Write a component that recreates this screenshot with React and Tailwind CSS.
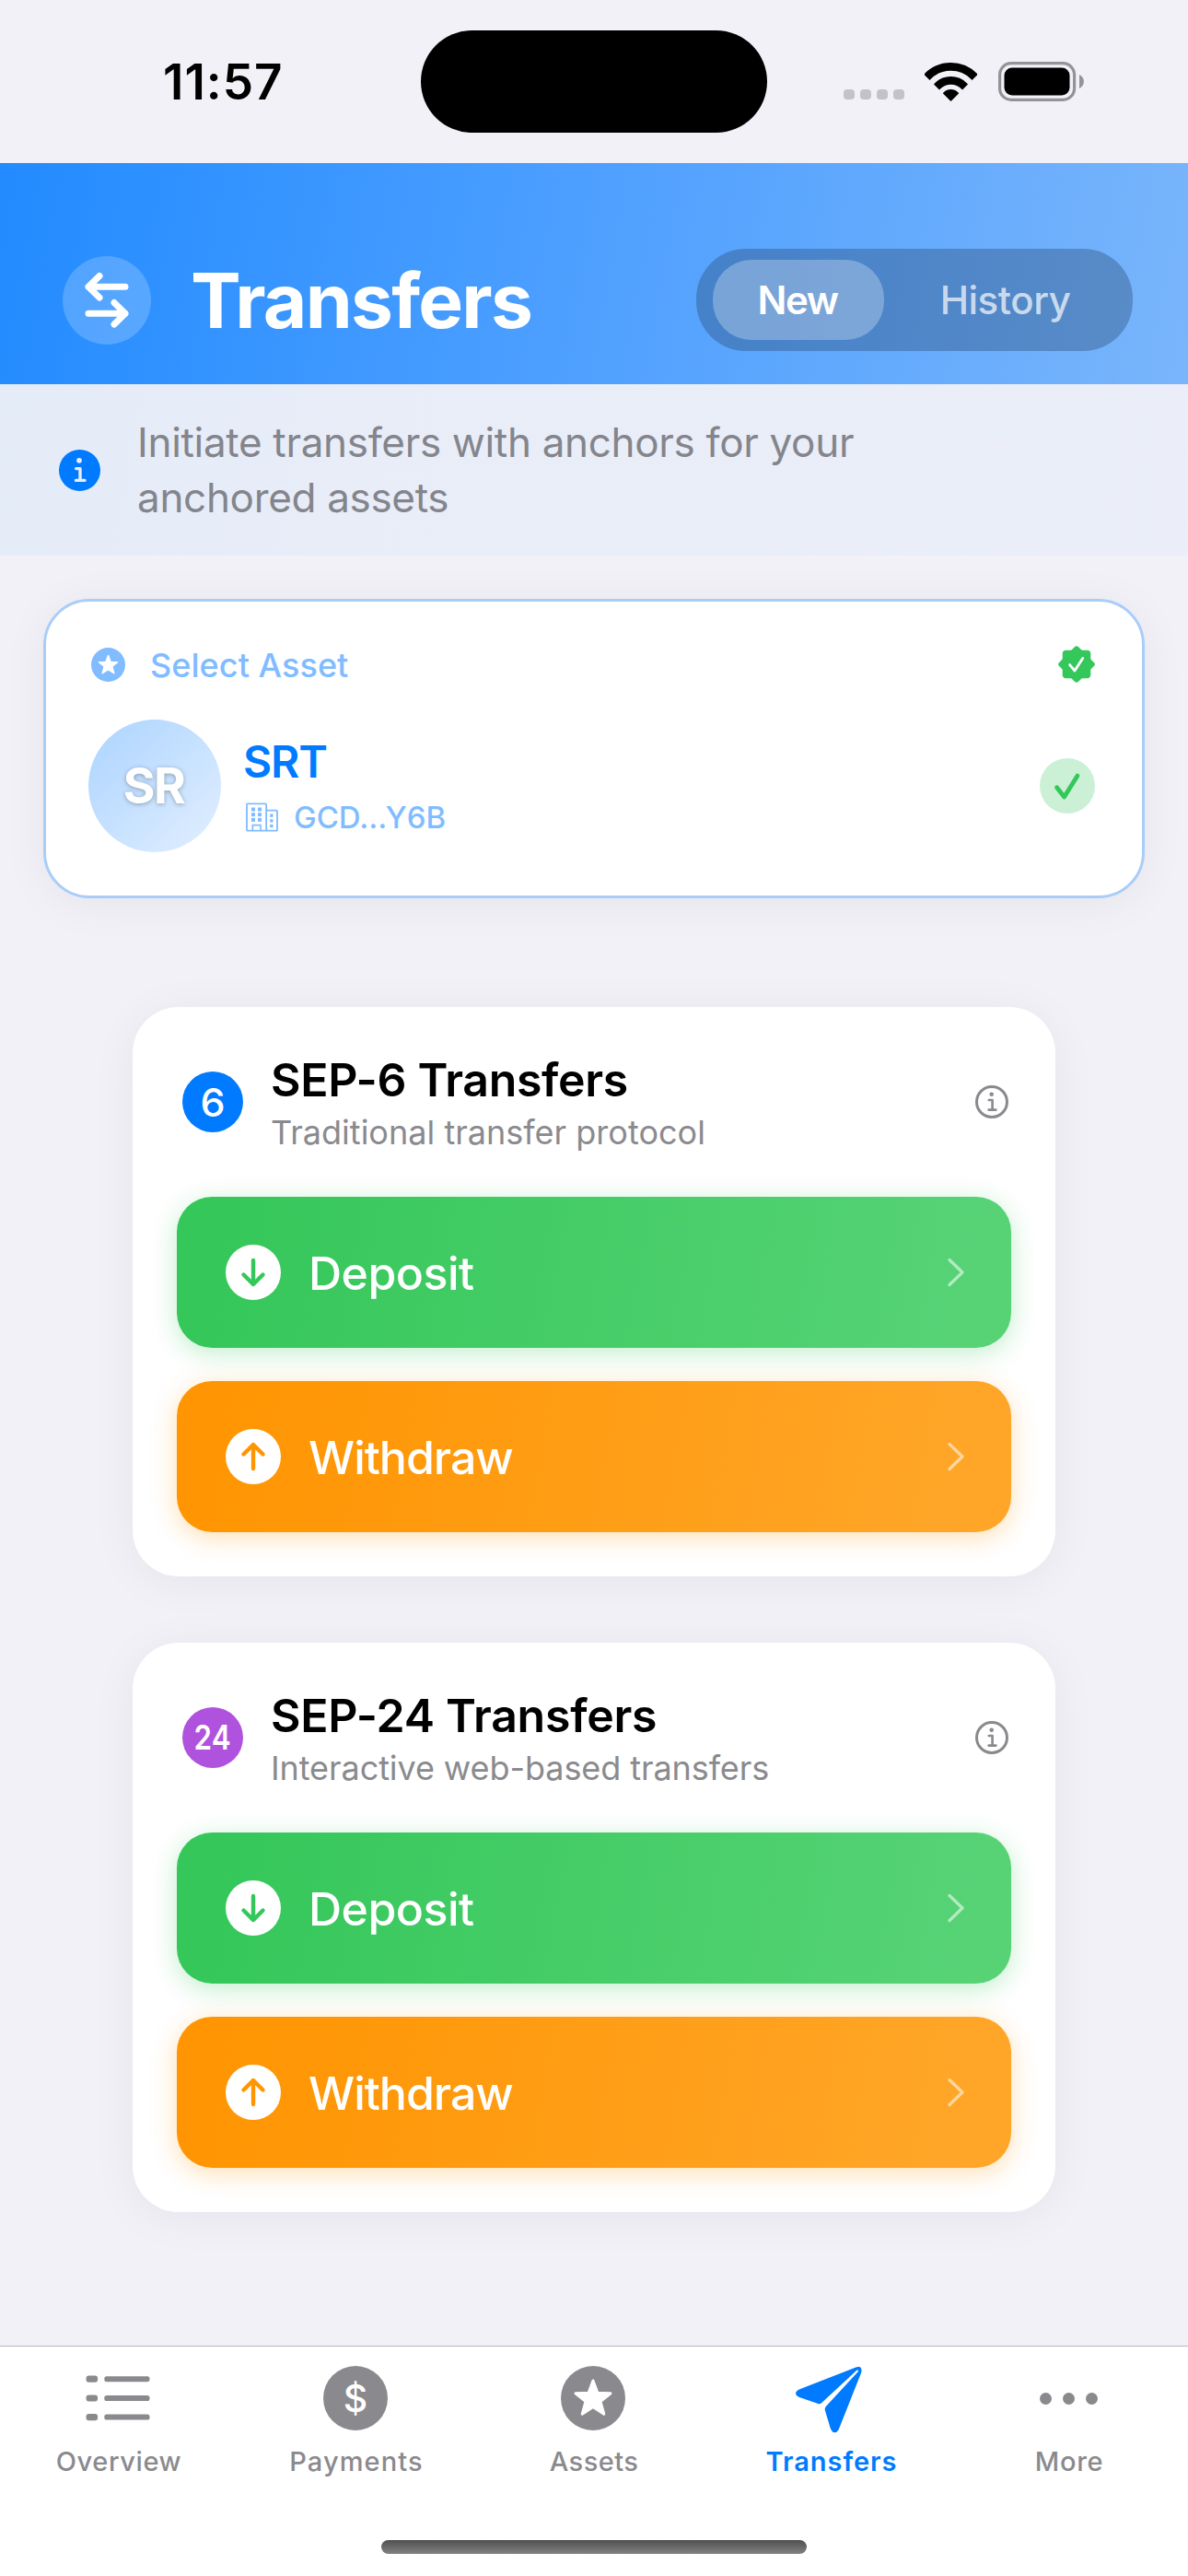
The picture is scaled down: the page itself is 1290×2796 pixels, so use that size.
const STAR =
  'M0 -20 L4.9 -6.8 L19 -6.2 L8 2.6 L11.8 16.2 L0 8.4 L-11.8 16.2 L-8 2.6 L-19 -6.2 L-4.9 -6.8 Z';

function StarCircle({ className }) {
  return (
    <svg viewBox="0 0 70 70" className={className}>
      <circle cx="35" cy="35" r="35" fill="currentColor" />
      <path d={STAR} transform="translate(35 36)" fill="#fff" stroke="#fff" strokeWidth="3" strokeLinejoin="round" />
    </svg>
  );
}

function StatusBar() {
  return (
    <div className="grid h-[177px] shrink-0 grid-cols-[457px_376px_457px] items-center">
      <span className="pl-[177px] text-[53px] leading-[60px] font-semibold tracking-[0.99px] text-black">11:57</span>
      <span className="h-[111px] rounded-full bg-black" />
      <div className="flex items-center pl-[83px]">
        <div className="mt-[27px] flex gap-[6px]">
          {[0, 1, 2, 3].map((i) => (
            <span key={i} className="h-[11px] w-[12px] rounded-[4px] bg-[#c3c2c8]" />
          ))}
        </div>
        <svg viewBox="0 0 57 42" className="ml-[22px] h-[42px] w-[57px]" fill="none" stroke="#000">
          <clipPath id="wifi-wedge">
            <path d="M28.5 42 L-3 10.5 V-3 H60 V10.5 Z" />
          </clipPath>
          <g clipPath="url(#wifi-wedge)">
            <circle cx="28.5" cy="40" r="35.6" strokeWidth="8.8" />
            <circle cx="28.5" cy="40" r="20.6" strokeWidth="8.6" />
            <circle cx="28.5" cy="40" r="11" fill="#000" stroke="none" />
          </g>
        </svg>
        <svg viewBox="0 0 94 43" className="ml-[23px] h-[43px] w-[94px]">
          <rect x="1.6" y="1.6" width="81" height="39.8" rx="12.5" fill="none" stroke="#949397" strokeWidth="3.2" />
          <rect x="6.5" y="6.5" width="71" height="30" rx="8.5" fill="#000" />
          <path d="M88 14 C94.5 17 94.5 26 88 29 Z" fill="#949397" />
        </svg>
      </div>
    </div>
  );
}

function Header() {
  return (
    <header className="flex h-[240px] shrink-0 items-center bg-[linear-gradient(100deg,#228bff_0%,#4fa0ff_50%,#79b5fb_100%)] pt-[57px] pr-[60px] pl-[68px]">
      <svg viewBox="0 0 96 96" className="h-[96px] w-[96px]" fill="none" stroke="#fff" strokeWidth="7" strokeLinecap="round" strokeLinejoin="round">
        <circle cx="48" cy="48" r="48" fill="#fff" fillOpacity="0.2" stroke="none" />
        <path d="M68 33.3 H28 M40 21.5 L28 33.3 L40 45" />
        <path d="M28 62.2 H68 M56 50.5 L68 62.2 L56 74" />
      </svg>
      <h1 className="mt-[3px] ml-[43px] text-[82px] leading-[90px] font-bold tracking-[-1.76px] text-white">Transfers</h1>
      <div className="ml-auto flex h-[111px] w-[474px] items-center rounded-[54px] bg-[#26466b]/36 pl-[18px]">
        <button className="h-[87px] w-[186px] rounded-[42px] bg-white/27 pr-[2px] text-[42px] leading-[60px] font-semibold tracking-[-1.5px] text-white">New</button>
        <button className="h-[87px] w-[263px] text-[42px] leading-[60px] font-medium tracking-[-0.44px] text-white/70">History</button>
      </div>
    </header>
  );
}

function Banner() {
  return (
    <section className="flex h-[186px] shrink-0 items-center bg-[linear-gradient(100deg,#e4ecf8_0%,#e8edf8_30%,#ebeef8_100%)] pl-[64px]">
      <svg viewBox="0 0 45 45" className="h-[45px] w-[45px] shrink-0" fill="none" stroke="#e8edf8" strokeWidth="3.4" strokeLinecap="round" strokeLinejoin="round">
        <circle cx="22.5" cy="22.5" r="22.5" fill="#007aff" stroke="none" />
        <circle cx="22" cy="11.8" r="2.9" fill="#e8edf8" stroke="none" />
        <path d="M18.6 20.6 H23 V33.4 M18.4 33.4 H28" />
      </svg>
      <p className="ml-[40px] text-[44px] leading-[60px] tracking-[-0.32px] text-[#84858c]">
        Initiate transfers with anchors for your
        <br />
        anchored assets
      </p>
    </section>
  );
}

function Building() {
  return (
    <svg viewBox="54 575 105 95" className="ml-[3px] h-[32px] w-[35px]" fill="none" stroke="#80bcff" strokeWidth="5.5">
      <rect x="57" y="578.5" width="63.5" height="88" rx="3" />
      <path d="M120.5 600.5 H153 Q156 600.5 156 603.5 V663.5 Q156 666.5 153 666.5 H120.5" />
      <path d="M76 666 V648.5 H102 V666" strokeWidth="5" />
      <g fill="#80bcff" stroke="none">
        {[591, 608, 625].map((y) => (
          <g key={y}>
            <rect x="72" y={y} width="12" height="12" />
            <rect x="93" y={y} width="12" height="12" />
          </g>
        ))}
        {[612, 629, 646].map((y) => (
          <rect key={y} x="132.5" y={y} width="10" height="10" />
        ))}
      </g>
    </svg>
  );
}

function AssetCard() {
  return (
    <section className="mx-[47px] mt-[47px] h-[325px] shrink-0 rounded-[50px] border-[3px] border-[#a9cdf9] bg-white pt-[46px] pr-[51px] pl-[46px] shadow-[0_6px_50px_rgba(0,0,0,0.055)]">
      <div className="flex h-[44px] items-center pl-[3px]">
        <StarCircle className="h-[37px] w-[37px] text-[#80bcff]" />
        <span className="mt-[2px] ml-[27px] text-[36px] leading-[44px] font-medium tracking-[0.05px] text-[#80bcff]">Select Asset</span>
        <svg viewBox="-21 -21 42 42" className="mr-[-1px] ml-auto h-[42px] w-[42px]" fill="#34c759">
          <rect x="-15.3" y="-15.3" width="30.6" height="30.6" rx="4" />
          <rect x="-14.8" y="-14.8" width="29.6" height="29.6" rx="3" transform="rotate(45)" />
          <path d="M-7.4 0.6 L-2 7 L6.7 -6.6" fill="none" stroke="#fff" strokeWidth="2.8" strokeLinecap="round" strokeLinejoin="round" />
        </svg>
      </div>
      <div className="mt-[38px] flex items-center">
        <div className="flex h-[144px] w-[144px] items-center justify-center rounded-full bg-[linear-gradient(135deg,#b3d8ff_15%,#ddecff_90%)] pr-[2px] text-[53px] leading-[60px] font-bold tracking-[-1.5px] text-white [text-shadow:0_1px_5px_rgba(0,0,0,0.3)]">
          SR
        </div>
        <div className="ml-[24px] pt-[8px]">
          <p className="text-[48px] leading-[60px] font-semibold tracking-[-1.2px] text-[#007aff]">SRT</p>
          <div className="flex h-[60px] items-center">
            <Building />
            <span className="ml-[17px] text-[33px] leading-[60px] font-medium text-[#80bcff]">GCD...Y6B</span>
          </div>
        </div>
        <svg viewBox="-30 -30 60 60" className="ml-auto h-[60px] w-[60px]">
          <circle r="30" fill="#cbf0d5" />
          <path d="M-11.4 1.7 L-3.4 12 L11 -11" fill="none" stroke="#34c759" strokeWidth="4.8" strokeLinecap="round" strokeLinejoin="round" />
        </svg>
      </div>
    </section>
  );
}

function ActionButton({ label, up, className, labelClass, color }) {
  return (
    <button className={`flex h-[164px] w-full items-center rounded-[38px] pr-[51px] pl-[53px] ${className}`}>
      <svg viewBox="-30 -30 60 60" className="h-[60px] w-[60px]">
        <circle r="30" fill="#fff" />
        <path
          d="M0 -13 V13 M-10.5 2.5 L0 13 L10.5 2.5"
          transform={up ? 'scale(1 -1)' : undefined}
          fill="none"
          stroke={color}
          strokeWidth="4.4"
          strokeLinecap="round"
          strokeLinejoin="round"
        />
      </svg>
      <span className={`mt-[2px] text-[50px] leading-[60px] font-medium text-white ${labelClass}`}>{label}</span>
      <svg viewBox="0 0 18 32" className="ml-auto h-[32px] w-[18px]" fill="none" stroke="#fff" strokeOpacity="0.55" strokeWidth="3.3" strokeLinecap="round" strokeLinejoin="round">
        <path d="M2 2.5 L16 16 L2 29.5" />
      </svg>
    </button>
  );
}

function TransferCard({ className, badge, title, titleClass, subtitle, subtitleClass }) {
  return (
    <section className={`mx-[144px] h-[618px] shrink-0 rounded-[50px] bg-white px-[48px] pt-[49px] shadow-[0_6px_50px_rgba(0,0,0,0.055)] ${className}`}>
      <div className="flex h-[114px] items-center pr-[3px] pl-[6px]">
        {badge}
        <div className="ml-[30px]">
          <h2 className={`text-[50px] leading-[60px] font-semibold text-black ${titleClass}`}>{title}</h2>
          <p className={`text-[36px] leading-[54px] text-[#8a8a8e] ${subtitleClass}`}>{subtitle}</p>
        </div>
        <svg viewBox="0 0 36 36" className="mb-[6px] ml-auto h-[36px] w-[36px]" fill="none" stroke="#8a8a8e" strokeWidth="2.6" strokeLinecap="round" strokeLinejoin="round">
          <circle cx="18" cy="18" r="16.5" strokeWidth="3" />
          <circle cx="17.7" cy="9.8" r="2.3" fill="#8a8a8e" stroke="none" />
          <path d="M14.8 16 H18.6 V26.6 M14.6 26.6 H22.4" />
        </svg>
      </div>
      <div className="mt-[43px] flex flex-col gap-[36px]">
        <ActionButton
          label="Deposit"
          color="#34c759"
          className="bg-[linear-gradient(100deg,#35c75a_5%,#57d376_95%)] shadow-[0_6px_28px_rgba(52,199,89,0.3)]"
          labelClass="ml-[30px] tracking-[-0.51px]"
        />
        <ActionButton
          label="Withdraw"
          up
          color="#ff9500"
          className="bg-[linear-gradient(100deg,#ff9502_5%,#ffa629_95%)] shadow-[0_6px_28px_rgba(255,149,0,0.3)]"
          labelClass="ml-[30px] tracking-[-1px]"
        />
      </div>
    </section>
  );
}

function Tab({ label, active, labelClass, children }) {
  return (
    <a className={`flex w-[258px] flex-col items-center ${active ? 'text-[#007aff]' : 'text-[#8a8a8e]'}`}>
      <span className="flex h-[72px] items-center justify-center pr-[2px]">{children}</span>
      <span className={`mt-[13px] text-[29px] leading-[40px] ${active ? 'font-semibold' : 'font-medium'} ${labelClass}`}>{label}</span>
    </a>
  );
}

function TabBar() {
  return (
    <nav className="flex h-[250px] shrink-0 flex-col items-center border-t border-[#b8b7bf] bg-white pt-[20px]">
      <div className="flex">
        <Tab label="Overview" labelClass="tracking-[0.6px]">
          <svg viewBox="0 0 70 50" className="h-[50px] w-[70px]" fill="currentColor">
            {[4.2, 25, 45.6].map((y) => (
              <g key={y}>
                <rect x="0.5" y={y - 3.6} width="12.6" height="7.2" rx="3" />
                <rect x="20.3" y={y - 3} width="49.2" height="6" rx="2.6" />
              </g>
            ))}
          </svg>
        </Tab>
        <Tab label="Payments" labelClass="tracking-[1.1px]">
          <span className="flex h-[70px] w-[70px] items-center justify-center rounded-full bg-[#8a8a8e] text-[41px] leading-[50px] font-medium text-white">$</span>
        </Tab>
        <Tab label="Assets" labelClass="tracking-[0.43px]">
          <StarCircle className="h-[70px] w-[70px]" />
        </Tab>
        <Tab label="Transfers" active labelClass="tracking-[0.95px]">
          <svg viewBox="0 0 72 72" className="mt-[4px] ml-[-4px] h-[72px] w-[72px]" fill="currentColor">
            <path d="M66 0.3 L5 24 Q0 26.2 0 28.6 Q0 31.4 4 32.9 L24.5 39.9 Q27 40.8 28.8 38.6 L66.6 3.6 Q68.4 3 67.9 5 L32.8 43 Q31.4 45 31.8 47 L37.6 66.3 Q39.3 71.3 42.4 71.3 Q45.6 71.3 47.4 66.3 L71.3 6 Q72.5 -1.8 66 0.3 Z" />
          </svg>
        </Tab>
        <Tab label="More" labelClass="tracking-[0.7px]">
          <span className="flex gap-[12px]">
            {[0, 1, 2].map((i) => (
              <span key={i} className="h-[13px] w-[13px] rounded-full bg-[#8a8a8e]" />
            ))}
          </span>
        </Tab>
      </div>
      <span className="mt-auto mb-[24px] h-[15px] w-[462px] rounded-full bg-linear-to-b from-[#505050] to-[#828282]" />
    </nav>
  );
}

export default function App() {
  return (
    <div className="flex h-[2796px] w-[1290px] flex-col bg-[#f2f1f7] font-['Inter',sans-serif]">
      <StatusBar />
      <Header />
      <Banner />
      <main className="flex flex-1 flex-col">
        <AssetCard />
        <TransferCard
          className="mt-[118px]"
          title="SEP-6 Transfers"
          titleClass="tracking-[-0.33px]"
          subtitle="Traditional transfer protocol"
          subtitleClass="tracking-[0.02px]"
          badge={
            <span className="mb-[6px] flex h-[66px] w-[66px] items-center justify-center rounded-full bg-[#007aff] text-[43px] leading-[50px] font-medium text-white">6</span>
          }
        />
        <TransferCard
          className="mt-[72px]"
          title="SEP-24 Transfers"
          titleClass="tracking-[-0.25px]"
          subtitle="Interactive web-based transfers"
          subtitleClass="tracking-[-0.08px]"
          badge={
            <span className="mb-[6px] flex h-[66px] w-[66px] items-center justify-center rounded-full bg-[#af52de] text-[37px] leading-[50px] font-semibold text-white">
              <span className="inline-block scale-x-[0.85]">24</span>
            </span>
          }
        />
      </main>
      <TabBar />
    </div>
  );
}
